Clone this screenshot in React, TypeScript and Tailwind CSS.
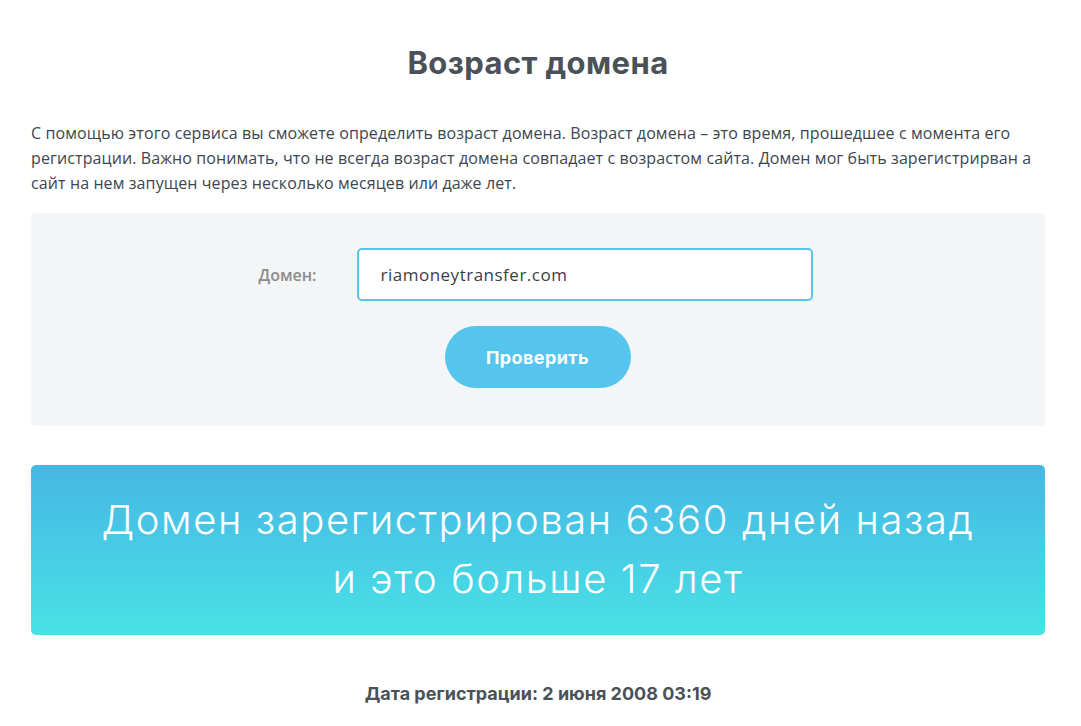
export default function App() {
  return (
    <div className="w-[1081px] min-h-[726px] bg-white">
      <div className="px-[31px] pt-[42px] pb-[20px] w-[1076px]">
        <h1 className="text-center text-[31px] leading-[42px] font-bold text-[#4b5158] font-['Inter',sans-serif] tracking-[0.4px]">
          Возраст домена
        </h1>
        <p className="mt-[37px] text-[16px] leading-[25px] tracking-[0.1px] text-[#3c4650] font-['Open_Sans',sans-serif]">
          С помощью этого сервиса вы сможете определить возраст домена. Возраст домена – это время, прошедшее с момента его регистрации. Важно понимать, что не всегда возраст домена совпадает с возрастом сайта. Домен мог быть зарегистрирван а сайт на нем запущен через несколько месяцев или даже лет.
        </p>
        <div className="mt-[17px] h-[213px] rounded-[5px] bg-[#f3f5f6] flex flex-col items-center pt-[35px]">
          <div className="flex items-center mr-[10px]">
            <label className="w-[103px] pr-[40px] text-right text-[16px] font-semibold text-[#8c8c8c] font-['Open_Sans',sans-serif]">
              Домен:
            </label>
            <div className="w-[456px] h-[53px] border-2 border-[#5cc4ea] rounded-[5px] bg-white flex items-center pl-[22px] text-[17px] tracking-[0.5px] text-[#3a3f45] font-['Open_Sans',sans-serif]">
              riamoneytransfer.com
            </div>
          </div>
          <button className="mt-[25px] ml-[-1px] w-[186px] h-[62px] rounded-full bg-[#56c5ee] text-white text-[18px] tracking-[0.4px] font-bold font-['Inter',sans-serif]">
            Проверить
          </button>
        </div>
        <div className="mt-[39px] h-[170px] rounded-[5px] bg-gradient-to-b from-[#47b6e4] to-[#48e2e5] flex flex-col items-center justify-center text-white text-[40px] tracking-[1.6px] leading-[59px] font-light font-['Inter',sans-serif] pb-[3px]">
          <div>Домен зарегистрирован 6360 дней назад</div>
          <div>и это больше 17 лет</div>
        </div>
        <div className="mt-[45px] text-center text-[18px] font-bold text-[#4b5158] font-['Inter',sans-serif]">
          Дата регистрации: 2 июня 2008 03:19
        </div>
      </div>
    </div>
  );
}
